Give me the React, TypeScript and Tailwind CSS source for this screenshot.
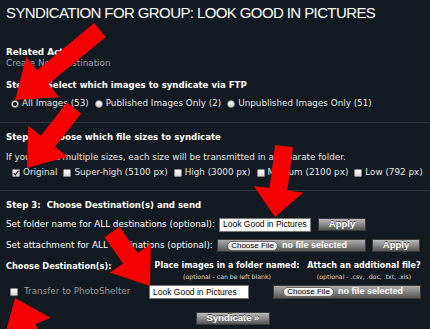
import React from 'react'

type Arrow = { tail: [number, number]; tip: [number, number]; head?: number; half?: number }

// red call-out arrows painted over the screenshot
const arrows: Arrow[] = [
  { tail: [100, 30], tip: [15, 100], head: 36, half: 26 },
  { tail: [74, 108], tip: [27, 168], head: 34, half: 25 },
  { tail: [284, 146], tip: [275, 217], head: 28, half: 25 },
  { tail: [112, 232], tip: [150, 286], head: 34, half: 25 },
  { tail: [42, 362], tip: [15, 298], head: 32, half: 25 },
]

function arrowPoints({ tail, tip, head = 32, half = 23 }: Arrow, shaft = 9) {
  const [tx, ty] = tail
  const [px, py] = tip
  const len = Math.hypot(px - tx, py - ty)
  const ux = (px - tx) / len
  const uy = (py - ty) / len
  const nx = -uy
  const ny = ux
  const bx = px - ux * head
  const by = py - uy * head
  const pts = [
    [tx + nx * shaft, ty + ny * shaft],
    [bx + nx * shaft, by + ny * shaft],
    [bx + nx * half, by + ny * half],
    [px, py],
    [bx - nx * half, by - ny * half],
    [bx - nx * shaft, by - ny * shaft],
    [tx - nx * shaft, ty - ny * shaft],
  ]
  return pts.map((p) => p.map((v) => v.toFixed(1)).join(',')).join(' ')
}

function Radio({ checked }: { checked?: boolean }) {
  return (
    <span className="w-[8px] h-[8px] rounded-full bg-gradient-to-b from-white to-[#d8d8d8] border border-[#8a8a8a] flex items-center justify-center shrink-0">
      {checked && <span className="w-[4px] h-[4px] rounded-full bg-[#111]" />}
    </span>
  )
}

function Check({ checked }: { checked?: boolean }) {
  return (
    <span className="w-[8px] h-[8px] rounded-[1px] bg-gradient-to-b from-white to-[#d6d6d6] border border-[#8a8a8a] flex items-center justify-center shrink-0">
      {checked && (
        <svg viewBox="0 0 8 8" className="w-[8px] h-[8px]">
          <path d="M1.2 4.2 L3.2 6.4 L7.2 0.8" fill="none" stroke="#000" strokeWidth="1.6" />
        </svg>
      )}
    </span>
  )
}

function Button({ label, className = '' }: { label: string; className?: string }) {
  return (
    <span
      className={`h-[13px] flex items-center justify-center bg-gradient-to-b from-[#bdbdbd] via-[#8a8a8a] to-[#555] border border-[#3a3a3a] text-white font-bold font-['Liberation_Sans',Arial,sans-serif] text-[9.5px] [text-shadow:0_-1px_0_#444] ${className}`}
    >
      {label}
    </span>
  )
}

function FileBox({ className = '' }: { className?: string }) {
  return (
    <span
      className={`h-[13px] flex items-center gap-[4px] pl-[9px] bg-gradient-to-b from-[#acacac] via-[#828282] to-[#585858] border border-[#3a3a3a] font-['Liberation_Sans',Arial,sans-serif] ${className}`}
    >
      <span className="h-[10px] w-[51px] rounded-full bg-gradient-to-b from-white to-[#dedede] border border-[#6a6a6a] text-black text-[8px] flex items-center justify-center">
        Choose File
      </span>
      <span className="text-white font-bold text-[9px]">no file selected</span>
    </span>
  )
}

function TextBox({ value, className = '' }: { value: string; className?: string }) {
  return (
    <span
      className={`h-[14px] flex items-center pl-[3px] bg-white border border-[#777] text-black text-[8.5px] font-['Liberation_Sans',Arial,sans-serif] ${className}`}
    >
      {value}
    </span>
  )
}

export default function App() {
  const sizes = [
    { label: 'Original', checked: true },
    { label: 'Super-high (5100 px)' },
    { label: 'High (3000 px)' },
    { label: 'Medium (2100 px)' },
    { label: 'Low (792 px)' },
  ]

  return (
    <div className="relative w-[430px] h-[329px] overflow-hidden bg-[#131a21] text-[#e6e6e6] text-[8.8px] font-['DejaVu_Sans',Verdana,sans-serif]">
      {/* Title */}
      <h1 className="h-[26px] flex items-center pl-[6px] text-white text-[15px] tracking-[-0.6px] font-['Liberation_Sans',Arial,sans-serif]">
        SYNDICATION FOR GROUP: LOOK GOOD IN PICTURES
      </h1>

      <div className="pl-[6px] pt-[21px]">
        <div className="h-[11px] leading-[11px] text-white font-bold">Related Actions</div>
        <div className="h-[11px] leading-[11px] text-[#9ba3ab]">Create New Destination</div>

        {/* Step 1 */}
        <div className="mt-[10px] h-[12px] leading-[12px] text-white font-bold text-[8.6px]">
          Step 1:&nbsp; Select which images to syndicate via FTP
        </div>
        <div className="mt-[6px] h-[14px] flex items-center gap-[6px] pl-[5px]">
          <span className="flex items-center gap-[3px]">
            <Radio checked /> All Images (53)
          </span>
          <span className="flex items-center gap-[3px]">
            <Radio /> Published Images Only (2)
          </span>
          <span className="flex items-center gap-[3px]">
            <Radio /> Unpublished Images Only (51)
          </span>
        </div>
      </div>

      <div className="mt-[11px] h-px bg-[#2b343c]" />

      <div className="pl-[6px]">
        {/* Step 2 */}
        <div className="mt-[8px] h-[12px] leading-[12px] text-white font-bold text-[8.6px]">
          Step 2:&nbsp; Choose which file sizes to syndicate
        </div>
        <div className="mt-[8px] h-[12px] leading-[12px]">
          If you select multiple sizes, each size will be transmitted in a separate folder.
        </div>
        <div className="mt-[3px] h-[13px] flex items-center gap-[6px] pl-[6px]">
          {sizes.map((s) => (
            <span key={s.label} className="flex items-center gap-[3px]">
              <Check checked={s.checked} /> {s.label}
            </span>
          ))}
        </div>
      </div>

      <div className="mt-[11px] h-px bg-[#2b343c]" />

      <div className="pl-[6px]">
        {/* Step 3 */}
        <div className="mt-[8px] h-[12px] leading-[12px] text-white font-bold text-[8.6px]">
          Step 3:&nbsp; Choose Destination(s) and send
        </div>
        <div className="mt-[6px] h-[15px] flex items-center">
          <span className="w-[213px] text-white">Set folder name for ALL destinations (optional):</span>
          <TextBox value="Look Good in Pictures" className="w-[92px]" />
          <Button label="Apply" className="ml-[7px] w-[48px]" />
        </div>
        <div className="mt-[6px] h-[15px] flex items-center">
          <span className="w-[211px] text-white">Set attachment for ALL destinations (optional):</span>
          <FileBox className="w-[149px]" />
          <Button label="Apply" className="ml-[6px] w-[48px]" />
        </div>

        {/* Destination table */}
        <div className="mt-[6px] flex">
          <div className="w-[143px] h-[14px] flex items-center text-white font-bold text-[8.2px]">
            Choose Destination(s):
          </div>
          <div className="w-[156px] text-center">
            <div className="h-[14px] leading-[14px] text-white font-bold text-[8px]">
              Place images in a folder named:
            </div>
            <div className="h-[8px] leading-[8px] text-[6.2px] text-[#dcdcdc]">(optional - can be left blank)</div>
          </div>
          <div className="w-[118px] text-center">
            <div className="h-[14px] leading-[14px] text-white font-bold text-[8px]">Attach an additional file?</div>
            <div className="h-[8px] leading-[8px] text-[6.2px] text-[#dcdcdc]">(optional - .csv, .doc, .txt, .xls)</div>
          </div>
        </div>
        <div className="mt-[3px] h-[16px] flex items-center">
          <div className="w-[143px] flex items-center gap-[6px] pl-[4px] text-[#9a9a9a]">
            <Check /> Transfer to PhotoShelter
          </div>
          <TextBox value="Look Good in Pictures" className="w-[100px]" />
          <FileBox className="ml-[24px] w-[148px] h-[14px]" />
        </div>

        <div className="mt-[12px] pl-[190px]">
          <Button label="Syndicate »" className="w-[74px]" />
        </div>
      </div>

      <svg className="absolute inset-0 pointer-events-none" width="430" height="329" viewBox="0 0 430 329">
        {arrows.map((a, i) => (
          <polygon key={i} points={arrowPoints(a)} fill="#f40000" />
        ))}
      </svg>
    </div>
  )
}
